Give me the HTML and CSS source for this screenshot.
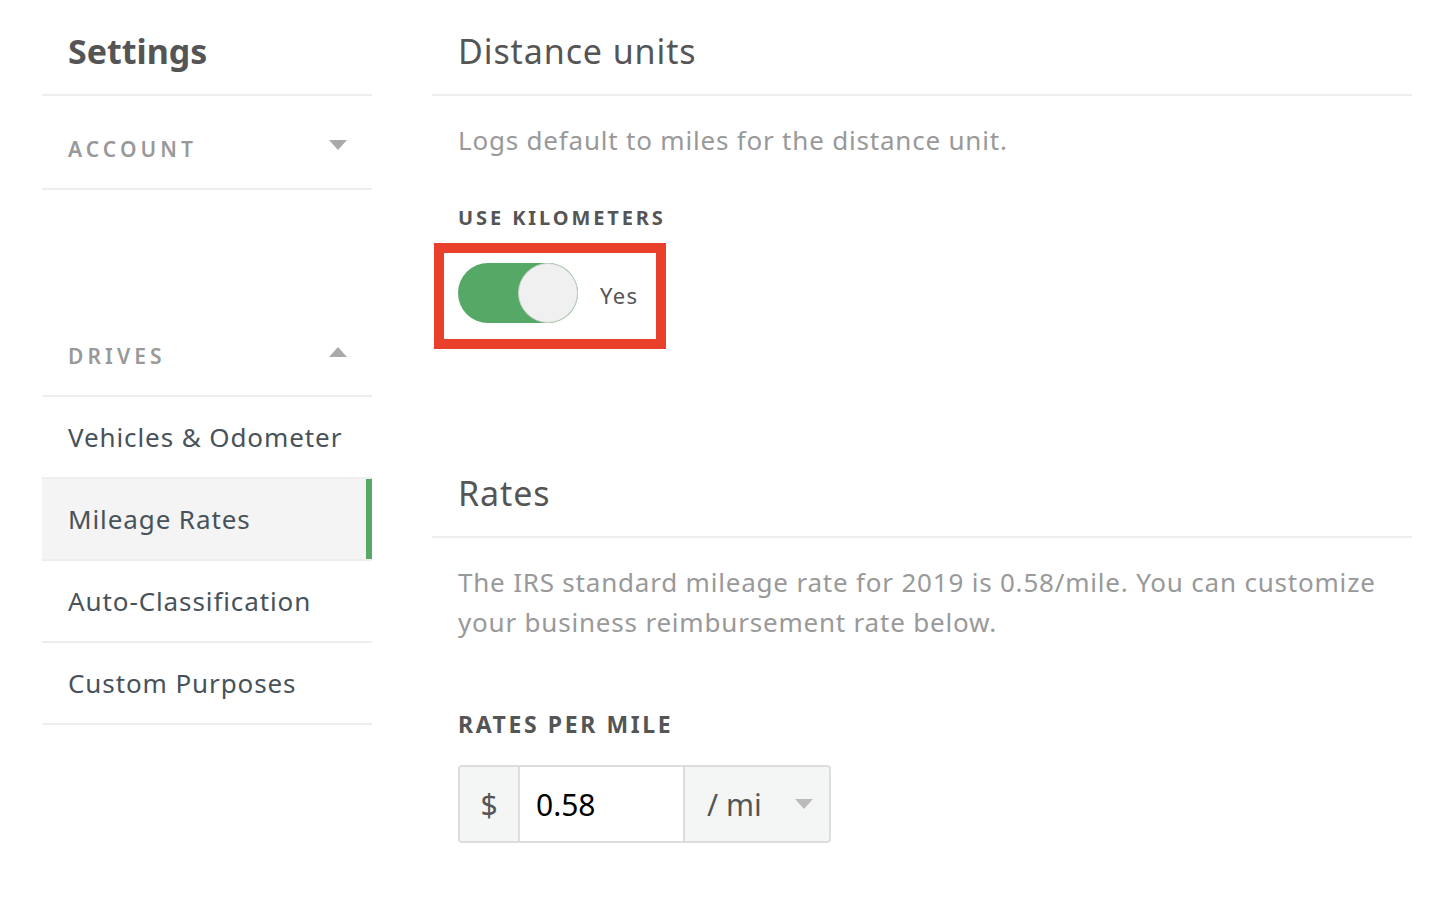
FILE: index.html
```html
<!DOCTYPE html>
<html>
  <head>
    <meta name="viewport" content="width=device-width, initial-scale=1">
    <link rel="stylesheet" href="styles.css">
  </head>
  <body>
    <div class="page">

      <!-- Menu lateral -->
      <nav class="sidebar">
        <div class="side-header">Settings</div>

        <div class="side-group">
          <span>ACCOUNT</span>
          <span class="caret down"></span>
        </div>

        <div class="side-group drives">
          <span>DRIVES</span>
          <span class="caret up"></span>
        </div>

        <a class="side-item" href="#">Vehicles &amp; Odometer</a>
        <a class="side-item active" href="#">Mileage Rates</a>
        <a class="side-item" href="#">Auto-Classification</a>
        <a class="side-item" href="#">Custom Purposes</a>
      </nav>

      <!-- Conteúdo principal -->
      <main class="content">
        <h2 class="section-title">Distance units</h2>
        <p class="section-desc">Logs default to miles for the distance unit.</p>

        <div class="field-label">USE KILOMETERS</div>
        <div class="highlight">
          <label class="toggle">
            <span class="track"><span class="knob"></span></span>
            <span class="toggle-text">Yes</span>
          </label>
        </div>

        <h2 class="section-title rates">Rates</h2>
        <p class="section-desc">The IRS standard mileage rate for 2019 is 0.58/mile. You can customize your business reimbursement rate below.</p>

        <div class="field-label per-mile">RATES PER MILE</div>
        <div class="rate-group">
          <span class="addon">$</span>
          <input class="rate-input" type="text" value="0.58">
          <span class="unit-select">
            <span>/ mi</span>
            <span class="caret down small"></span>
          </span>
        </div>
      </main>

    </div>
  </body>
</html>
```

FILE: styles.css
```css
html, body {
  margin: 0;
  background-color: #fff;
  font-family: "Noto Sans", "Open Sans", sans-serif;
}

.page {
  display: flex;
  gap: 60px;
  padding: 0 22px 0 42px;
}

/* Menu lateral */
.sidebar {
  width: 330px;
  flex-shrink: 0;
  display: flex;
  flex-direction: column;
}

.side-header {
  padding: 29px 26px 21px;
  line-height: 44px;
  font-size: 34px;
  font-weight: bold;
  color: #555;
  border-bottom: 2px solid #eee;
}

.side-group {
  display: flex;
  align-items: center;
  justify-content: space-between;
  height: 94px;
  padding: 14px 25px 0 26px;
  box-sizing: border-box;
  font-size: 21px;
  font-weight: 600;
  letter-spacing: 4.1px;
  color: #999;
  border-bottom: 2px solid #eee;
}

.side-group.drives {
  margin-top: 113px;
}

.caret {
  width: 0;
  height: 0;
  border-left: 9px solid transparent;
  border-right: 9px solid transparent;
  margin-bottom: 8px;
}

.caret.down {
  border-top: 10px solid #aaa;
}

.caret.up {
  border-bottom: 10px solid #aaa;
}

.side-item {
  display: block;
  height: 80px;
  line-height: 80px;
  padding: 0 26px;
  font-size: 26px;
  letter-spacing: 0.9px;
  color: #48525a;
  text-decoration: none;
  border-bottom: 2px solid #eee;
}

.side-item.active {
  background-color: #f4f4f4;
  box-shadow: inset -6px 0 0 #55a866;
}

/* Conteúdo */
.content {
  flex: 1;
  display: flex;
  flex-direction: column;
  align-items: flex-start;
}

.section-title {
  align-self: stretch;
  margin: 0;
  padding: 29px 26px 21px;
  line-height: 44px;
  font-size: 34px;
  font-weight: normal;
  letter-spacing: 0.9px;
  color: #555;
  border-bottom: 2px solid #eee;
}

.section-title.rates {
  margin-top: 93px;
}

.section-desc {
  margin: 24px 0 0;
  padding: 0 26px;
  line-height: 40px;
  font-size: 26px;
  letter-spacing: 0.8px;
  color: #999;
}

.field-label {
  margin-top: 44px;
  padding: 0 26px;
  line-height: 28px;
  font-size: 20px;
  font-weight: bold;
  letter-spacing: 2.9px;
  color: #555;
}

.field-label.per-mile {
  margin-top: 68px;
  font-size: 23px;
  letter-spacing: 2.6px;
}

.highlight {
  margin: 11px 0 0 2px;
  padding: 10px 17px 16px 14px;
  border: 10px solid #e8402a;
}

.toggle {
  display: flex;
  align-items: center;
  gap: 22px;
  cursor: pointer;
}

.track {
  position: relative;
  display: block;
  width: 120px;
  height: 60px;
  border-radius: 30px;
  background-color: #55a866;
}

.knob {
  position: absolute;
  top: 0;
  right: 0;
  width: 58px;
  height: 58px;
  border-radius: 50%;
  background-color: #f0f0f0;
  border: 1px solid #c8d0c8;
}

.toggle-text {
  font-size: 22px;
  letter-spacing: 1.4px;
  color: #555;
  padding-top: 4px;
}

/* Campo de taxa */
.rate-group {
  display: flex;
  margin: 27px 0 0 26px;
  height: 78px;
  box-sizing: border-box;
  border: 2px solid #ddd;
  border-radius: 4px;
  overflow: hidden;
}

.addon {
  width: 58px;
  display: flex;
  align-items: center;
  justify-content: center;
  background-color: #f4f5f5;
  border-right: 2px solid #ddd;
  font-size: 30px;
  color: #555;
}

.rate-input {
  width: 163px;
  box-sizing: border-box;
  border: none;
  outline: none;
  padding: 0 16px;
  font-family: inherit;
  font-size: 30px;
  color: #000;
}

.unit-select {
  width: 146px;
  display: flex;
  align-items: center;
  justify-content: space-between;
  padding: 0 16px 0 22px;
  box-sizing: border-box;
  background-color: #f4f5f5;
  border-left: 2px solid #ddd;
  font-size: 30px;
  color: #555;
}

.caret.small {
  margin-bottom: 0;
  border-top-color: #bbb;
}
```
